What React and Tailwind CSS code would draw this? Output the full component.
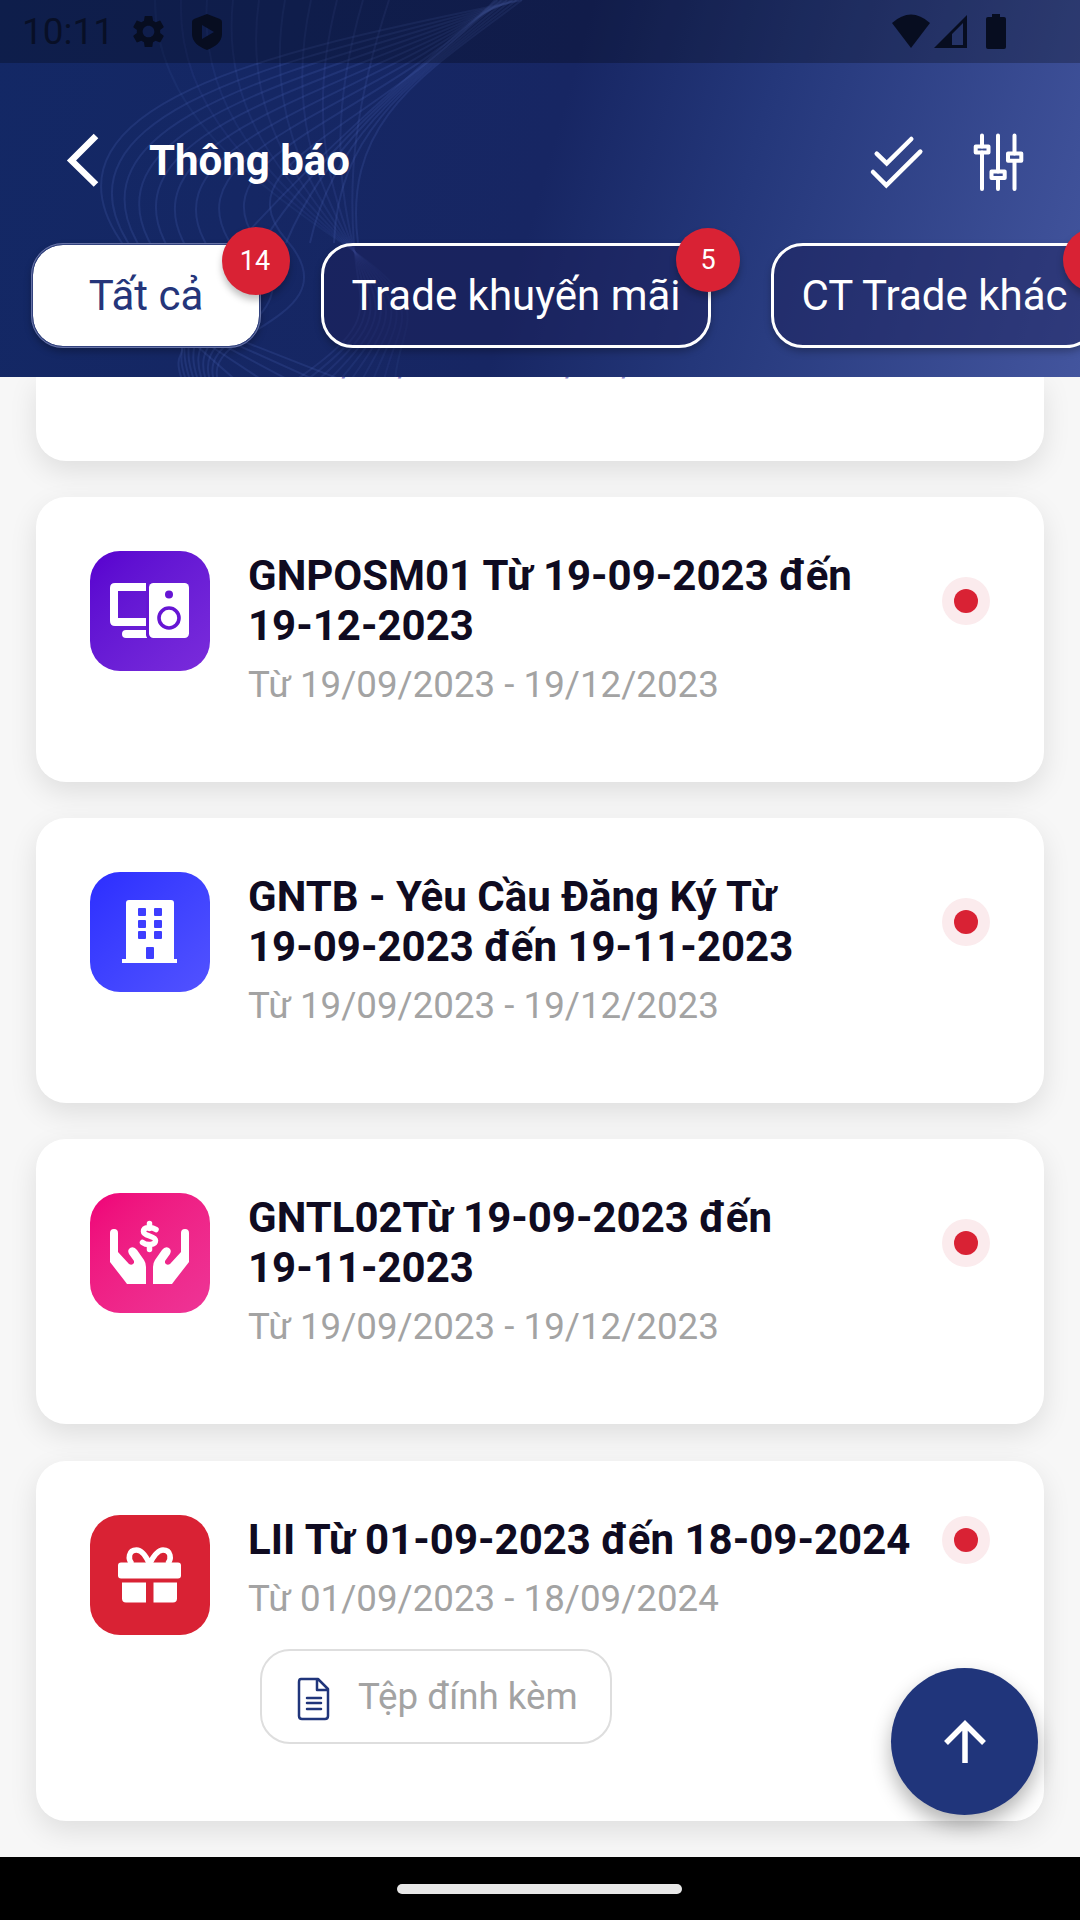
// src/App.jsx
import { MdSettings } from "react-icons/md";

const TABS = [
  { label: "Tất cả", count: 14, active: true },
  { label: "Trade khuyến mãi", count: 5 },
  { label: "CT Trade khác" },
];

const NOTIFICATIONS = [
  { id: 1, icon: "posm", color: "bg-linear-to-br from-[#5800cf] to-[#7a2bdb]", lines: ["GNPOSM01 Từ 19-09-2023 đến", "19-12-2023"], period: "Từ 19/09/2023 - 19/12/2023" },
  { id: 2, icon: "building", color: "bg-linear-to-br from-[#2d2dff] to-[#5252ff]", lines: ["GNTB - Yêu Cầu Đăng Ký Từ", "19-09-2023 đến 19-11-2023"], period: "Từ 19/09/2023 - 19/12/2023" },
  { id: 3, icon: "hands", color: "bg-linear-to-br from-[#ef0078] to-[#ee3496]", lines: ["GNTL02Từ 19-09-2023 đến", "19-11-2023"], period: "Từ 19/09/2023 - 19/12/2023" },
  { id: 4, icon: "gift", color: "bg-[#d92234]", lines: ["LII Từ 01-09-2023 đến 18-09-2024"], period: "Từ 01/09/2023 - 18/09/2024", attachment: true },
];

const HAND = "M20 40a4 4 0 0 1 8 0v19l11 12q3 2 5-1v-2l-5-7q-2-4 1-6 4-2 7 2l7 10q2 3 2 7v17H37l-3-4-14-18z";

// Icons are drawn on the 120x120 tile
const ICONS = {
  posm: (
    <g fill="white">
      <path d="M56 32v8H28v27h28v8H25q-5 0-5-5V37q0-5 5-5z" />
      <path d="M57 79v8H36a4 4 0 0 1 0-8z" />
      <rect x="56" y="31.500" width="8" height="56" rx="4" className="fill-[#6615d4]" />
      <rect x="59" y="32" width="40" height="55" rx="4.500" />
      <circle cx="79" cy="43.500" r="4" className="fill-[#6615d4]" />
      <circle cx="79" cy="67" r="10" strokeWidth="3.600" className="stroke-[#6615d4]" />
    </g>
  ),
  building: (
    <g fill="white">
      <path d="M36 87V31q0-3 3-3h42q3 0 3 3v56h3v4H32v-4z" />
      <g className="fill-[#3e3eff]">
        {[36, 48, 59].map((y) => (
          <g key={y}>
            <rect x="48" y={y} width="8" height="8" rx="1" />
            <rect x="64" y={y} width="8" height="8" rx="1" />
          </g>
        ))}
        <rect x="56" y="75" width="8" height="12" rx="1" />
      </g>
    </g>
  ),
  hands: (
    <g fill="white">
      <path d={HAND} />
      <path transform="matrix(-1 0 0 1 119 0)" d={HAND} />
      <path d="M66 36.500c-4-3-12.500-3-12.500 2s12 4 12 9-9 5-13 2M59.500 30.500v5M59.500 51.500v5" fill="none" stroke="white" strokeWidth="5.500" strokeLinecap="round" strokeLinejoin="round" />
    </g>
  ),
  gift: (
    <g fill="white">
      <path d="M59.500 49C56 41 52 35 46.500 35c-8 0-9 9-4.500 14M59.500 49c4-8 8-14 13.500-14 8 0 9 9 4.500 14" fill="none" stroke="white" strokeWidth="5.500" />
      <rect x="28" y="47.500" width="63" height="16" rx="3" />
      <path d="M32 67.500h24v20H36q-4 0-4-4zM63.500 67.500H87v16q0 4-4 4H63.500z" />
    </g>
  ),
};

// Faint guilloche pattern behind the header
function HeaderPattern() {
  const steps = Array.from({ length: 10 }, (_, i) => i);
  return (
    <svg className="absolute inset-0" width="1080" height="377" fill="none" stroke="#5068bd" strokeOpacity="0.2" strokeWidth="2">
      {steps.map((i) => (
        <path
          key={i}
          d={`M${522 - i * 3} 0C${340 + i * 4} ${40 + i * 10} ${20 + i * 22} ${90 + i * 8} ${120 + i * 5 + i * i * 1.5} 240S${165 + i * 4} 330 ${182 + i * 4} 380`}
        />
      ))}
      {steps.map((i) => (
        <path
          key={i}
          strokeOpacity={0.1 + i * 0.008}
          d={`M${155 + i * 26} 0C${155 + i * 22} 110 ${250 + i * 11} 180 ${345 + i} 245S${400 - i * 2} 320 ${395 - i * 11} 380`}
        />
      ))}
      {steps.slice(0, 6).map((i) => (
        <path key={i} d={`M${522 - i * 5} 0C${424 - i * 5} ${74 + i * 2} ${342 - i * 4} ${120 + i * 6} ${358 - i * 24} 243`} />
      ))}
      {steps.slice(0, 5).map((i) => (
        <path key={i} d={`M${245 - i * 12} ${342 + i}L${352 - i * 28} 384`} />
      ))}
    </svg>
  );
}

function StatusBar() {
  return (
    <div className="relative flex h-[63px] items-center bg-black/25 pl-[22px] text-[#070d20]">
      <span className="w-[107px] text-[37px] leading-none text-[#070d20]/85">10:11</span>
      <MdSettings className="size-[39px]" />
      <svg className="ml-[23px]" width="32" height="38" viewBox="0 0 32 38" fill="currentColor">
        <path fillRule="evenodd" d="M16 1l13 5q2 1 2 3v12c0 8-7 13-15 16C8 34 1 29 1 21V9q0-2 2-3zM11 12v14l12-7z" />
      </svg>
      <svg className="mr-[73px] ml-auto" width="115" height="38" viewBox="0 0 115 38" fill="currentColor">
        <path d="M0 10Q19-7 38 10L19 35z" />
        <path fillRule="evenodd" d="M42 35L75 2v33zM60 21v11h11V10z" />
        <path d="M100 1h8v3h4q2 0 2 2v28q0 2-2 2H96q-2 0-2-2V6q0-2 2-2h4z" />
      </svg>
    </div>
  );
}

function TitleBar() {
  return (
    <div className="relative flex h-[165px] items-start pt-[66px] text-white">
      <svg className="mt-[3px] ml-[64px]" width="36" height="56" viewBox="0 0 36 56" fill="none" stroke="white" strokeWidth="6.500">
        <path d="M32 4L7.500 28.500l24.500 24" />
      </svg>
      <h1 className="mt-[7px] ml-[49px] text-[42px] leading-[50px] font-bold">Thông báo</h1>
      <svg className="mt-[3px] ml-auto" width="56" height="62" viewBox="0 0 56 62" fill="none" stroke="white" strokeWidth="4.500" strokeLinecap="round">
        <path d="M7.700 21.700l10 9.700L42.300 7M4 40l13.300 13.300 34-33.600" />
      </svg>
      <svg className="mt-[3px] mr-[53px] ml-[46px]" width="56" height="64" viewBox="0 0 56 64" fill="none" stroke="white" strokeWidth="4" strokeLinecap="round" strokeLinejoin="round">
        <path d="M11 3.500v11m0 6V57M27 3.500v36m0 6.500v11M43.500 3.500v18m0 7.500v28" />
        <path d="M4.700 14.500h12.800v6H4.700zM20.500 39.500h13.200v6.500H20.500zM37 21.500h13.300v7.200H37z" />
      </svg>
    </div>
  );
}

function Tab({ label, count, active }) {
  return (
    <div
      className={`relative mt-[15px] flex h-[105px] shrink-0 items-center justify-center rounded-[32px] text-[42px] whitespace-nowrap shadow-[0_4px_7px_rgba(0,0,0,0.25)] ${
        active
          ? "w-[230px] border-[2.500px] border-[#33437f] bg-white bg-clip-padding text-[#25357a] outline -outline-offset-1 outline-[#8a94c0]/60"
          : "w-[390px] border-3 border-white bg-[#1b205a]/50 text-white last:w-[327px]"
      }`}
    >
      {label}
      <span
        className={`absolute -top-[18px] flex items-center justify-center rounded-full bg-[#d92234] text-[27px] text-white shadow-[0_5px_7px_rgba(0,0,0,0.25)] ${
          active ? "-right-[31px] size-[68px] pr-[2px]" : "-right-[32px] size-[64px]"
        }`}
      >
        {count}
      </span>
    </div>
  );
}

function NotificationCard({ item }) {
  return (
    <article className={`relative flex shrink-0 rounded-[30px] bg-white px-[54px] pt-[54px] shadow-[0_10px_28px_rgba(0,0,0,0.1)] ${item.attachment ? "mt-px h-[360px]" : "h-[285px]"}`}>
      <div className={`size-[119.500px] shrink-0 rounded-[30px] ${item.color}`}>
        <svg width="119" height="119" viewBox="0 0 119 119">{ICONS[item.icon]}</svg>
      </div>
      <div className="ml-[38.500px] flex-1 whitespace-nowrap">
        <h2 className="text-[42px] leading-[50px] font-bold text-[#0f0b21]">
          {item.lines.map((line) => (
            <span key={line} className="block">{line}</span>
          ))}
        </h2>
        <p className="mt-[12px] text-[36.700px] leading-[44px] text-[#a3a3a3]">{item.period}</p>
        {item.attachment && (
          <button className="mt-[28px] ml-[12px] flex h-[95px] w-[352px] items-center rounded-[30px] border-[2.500px] border-[#dedede] pl-[35px] text-[36.700px] text-[#a3a3a3]">
            <svg className="mt-[4px] mr-[27px]" width="34" height="44" viewBox="0 0 34 44" fill="none" stroke="#20357b" strokeWidth="2.500" strokeLinejoin="round" strokeLinecap="round">
              <path d="M4 2h17l10 10v27q0 3-3 3H5q-3 0-3-3V5q0-3 2-3zM20 2v11h11M10 21h14M10 26h14M10 32h14" />
            </svg>
            Tệp đính kèm
          </button>
        )}
      </div>
      <span className={`flex size-[48px] shrink-0 items-center justify-center rounded-full bg-[#fbebed] ${item.attachment ? "mt-px" : "mt-[26px]"}`}>
        <span className="size-[24px] rounded-full bg-[#d92234]" />
      </span>
    </article>
  );
}

function App() {
  return (
    <div className="relative flex h-[1920px] w-[1080px] flex-col overflow-hidden bg-[#f7f7f7] font-[Roboto,sans-serif]">
      {/* HEADER */}
      <header className="relative z-10 h-[377px] shrink-0 overflow-hidden bg-[linear-gradient(106deg,#132865_0%,#172663_50%,#24377a_67%,#43559e_100%)]">
        <HeaderPattern />
        <StatusBar />
        <TitleBar />
        <nav className="relative flex gap-[60px] pl-[31px]">
          {TABS.map((tab) => (
            <Tab key={tab.label} {...tab} />
          ))}
        </nav>
      </header>

      {/* LIST */}
      <main className="flex flex-1 flex-col gap-[36px] overflow-hidden px-[36px]">
        {/* card scrolled under the header */}
        <div className="h-[84px] shrink-0 overflow-hidden rounded-b-[30px] bg-white pl-[212px] shadow-[0_10px_28px_rgba(0,0,0,0.1)]">
          <p className="-mt-[35px] text-[36.700px] leading-[44px] text-[#8a86c8]">Từ 19/09/2023 - 19/12/2023</p>
        </div>
        {NOTIFICATIONS.map((item) => (
          <NotificationCard key={item.id} item={item} />
        ))}
      </main>

      {/* SCROLL TO TOP */}
      <button className="absolute top-[1668px] left-[891px] flex size-[147px] items-center justify-center rounded-full bg-[#20357b] shadow-[0_10px_20px_rgba(0,0,0,0.3)]">
        <svg width="44" height="44" viewBox="0 0 44 44" fill="none" stroke="white" strokeWidth="5.500">
          <path d="M22 43V5M3 23L22 4l19 19" />
        </svg>
      </button>

      <footer className="relative flex h-[63px] shrink-0 items-center justify-center bg-black pr-px">
        <div className="h-[10px] w-[285px] rounded-full bg-[#e8e8e8]" />
      </footer>
    </div>
  );
}

export default App;
